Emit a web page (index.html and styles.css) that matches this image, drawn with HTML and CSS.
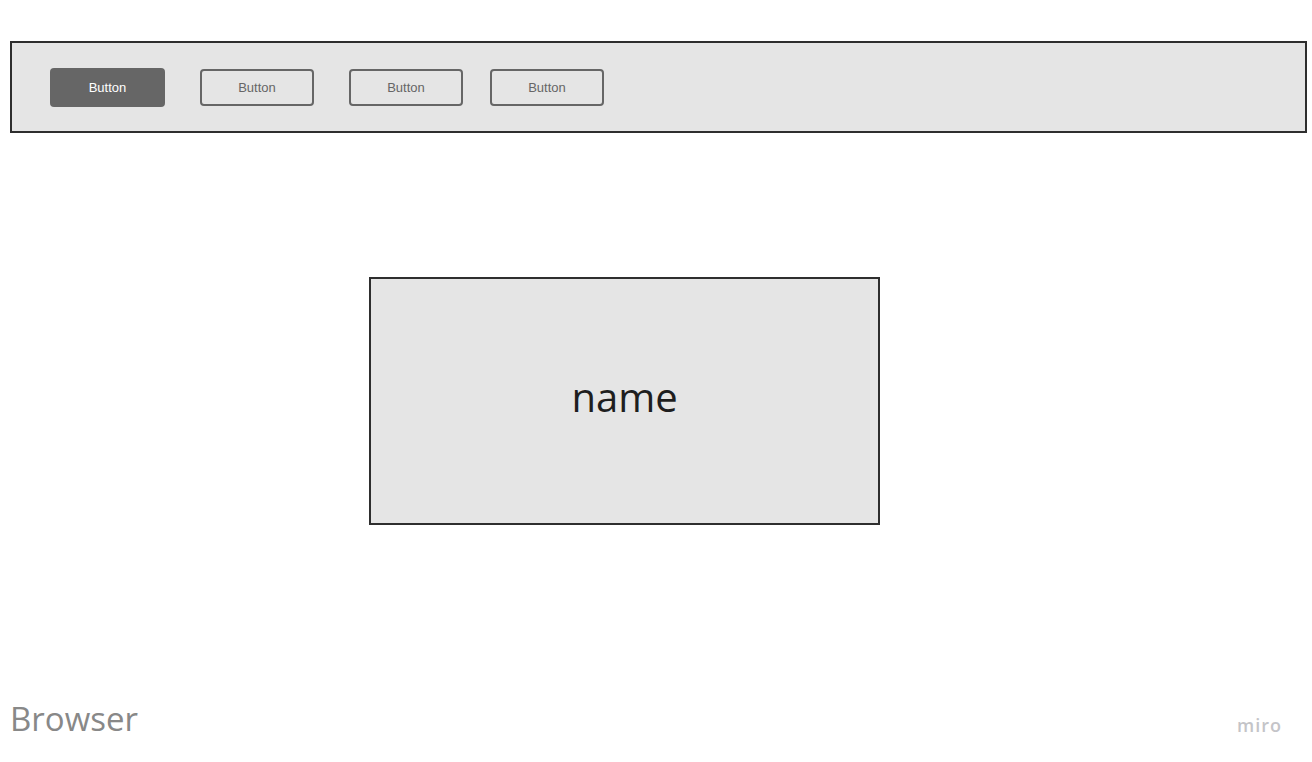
FILE: index.html
```html
<!DOCTYPE html>
<html>
<head>
<meta charset="utf-8">
<link rel="stylesheet" href="styles.css">
</head>
<body>
<div class="page">
  <div class="toolbar">
    <div class="btn btn-primary">Button</div>
    <div class="btn btn-outline b2">Button</div>
    <div class="btn btn-outline b3">Button</div>
    <div class="btn btn-outline b4">Button</div>
  </div>
  <div class="stage">
    <div class="card">name</div>
  </div>
  <div class="footer">
    <div class="title">Browser</div>
    <div class="logo">miro</div>
  </div>
</div>
</body>
</html>
```
FILE: styles.css
```css
html, body {
  margin: 0;
  padding: 0;
  background: #ffffff;
}
.page {
  width: 1312px;
  height: 762px;
  display: flex;
  flex-direction: column;
  box-sizing: border-box;
  padding: 41px 5px 0 10px;
}
.toolbar {
  height: 92px;
  box-sizing: border-box;
  border: 2px solid #2e2e2e;
  background: #e5e5e5;
  display: flex;
  align-items: center;
  padding-left: 38px;
}
.btn {
  width: 115px;
  height: 38px;
  box-sizing: border-box;
  border-radius: 4px;
  display: flex;
  align-items: center;
  justify-content: center;
  font-family: "Liberation Sans", Arial, sans-serif;
  font-size: 13px;
}
.btn-primary {
  background: #666666;
  color: #ffffff;
  height: 39px;
}
.btn-outline {
  border: 2px solid #666666;
  color: #666666;
  width: 114px;
  height: 37px;
}
.b2 { margin-left: 35px; }
.b3 { margin-left: 35px; }
.b4 { margin-left: 27px; }
.stage {
  padding-top: 144px;
  padding-left: 359px;
}
.card {
  width: 511px;
  height: 248px;
  box-sizing: border-box;
  border: 2px solid #2e2e2e;
  background: #e5e5e5;
  display: flex;
  align-items: center;
  justify-content: center;
  font-family: "Open Sans", sans-serif;
  font-size: 40px;
  color: #1e1e1e;
  padding-bottom: 10px;
}
.footer {
  flex: 1;
  display: flex;
  align-items: flex-end;
  justify-content: space-between;
  padding-bottom: 27px;
}
.title {
  font-family: "Open Sans", sans-serif;
  font-size: 33px;
  color: #888888;
  line-height: 1;
}
.logo {
  font-family: "Open Sans", sans-serif;
  font-size: 18px;
  font-weight: 600;
  color: #c4c4c8;
  line-height: 1;
  margin-right: 25px;
  margin-bottom: 1px;
  letter-spacing: 1px;
}
```
